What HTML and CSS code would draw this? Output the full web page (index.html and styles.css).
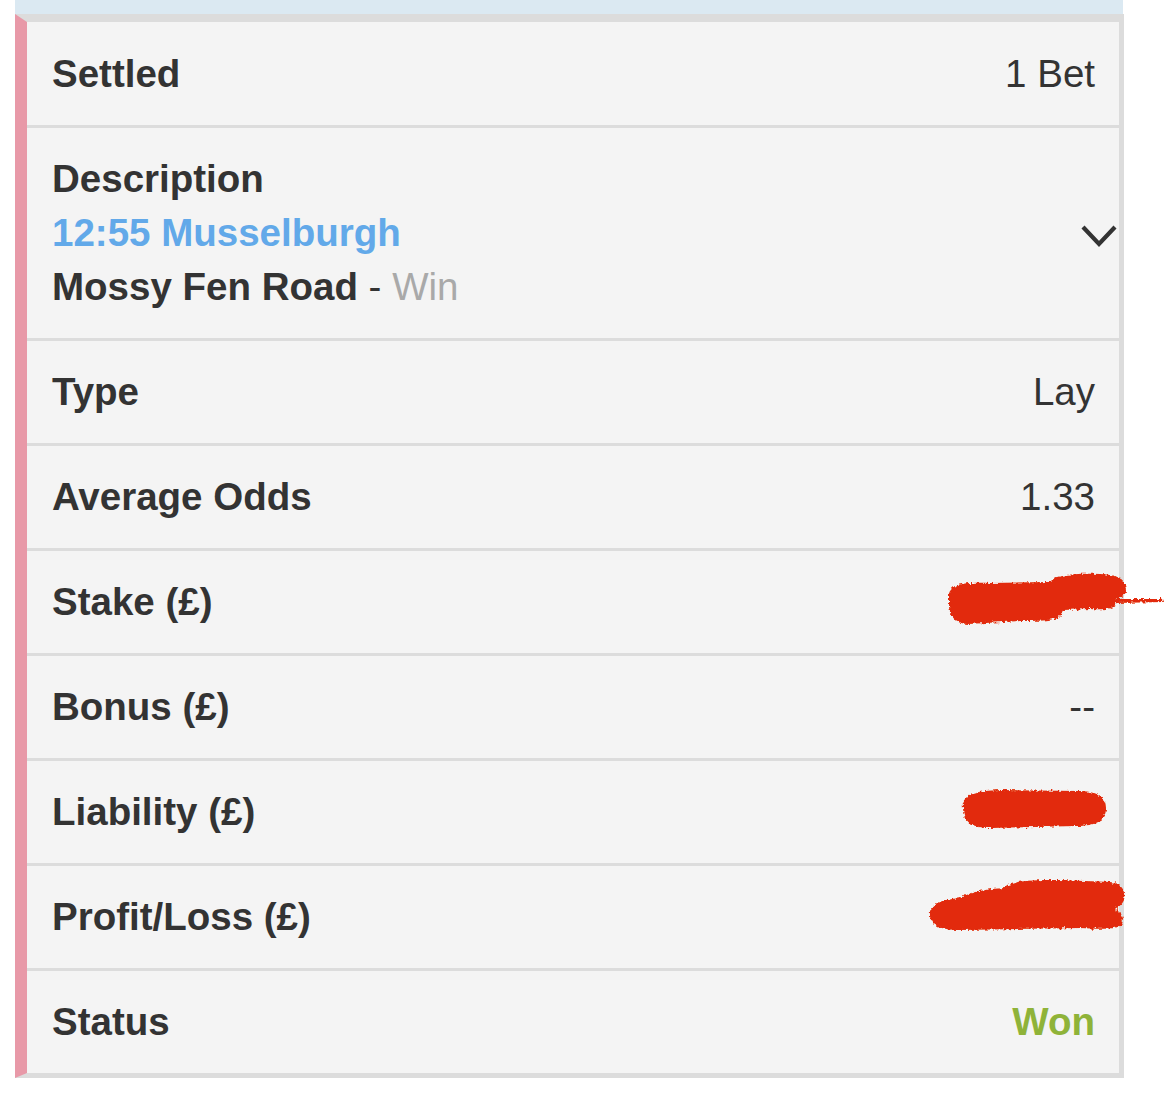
FILE: index.html
```html
<!DOCTYPE html>
<html lang="en">
<head>
<meta charset="utf-8">
<title>Bet details</title>
<link rel="stylesheet" href="styles.css">
</head>
<body>
<div class="page">
  <div class="topstrip"></div>
  <div class="card">
    <div class="row row-first"><span class="label">Settled</span><span class="value">1 Bet</span></div>
    <div class="row row-desc">
      <div class="desc">
        <div class="label">Description</div>
        <div class="event">12:55 Musselburgh</div>
        <div class="selection"><span class="label">Mossy Fen Road</span> - <span class="market">Win</span></div>
      </div>
      <svg class="chevron" width="36" height="24" viewBox="0 0 36 24"><polyline points="2,3 18,20 34,3" fill="none" stroke="#333" stroke-width="4.2" stroke-linejoin="miter"/></svg>
    </div>
    <div class="row"><span class="label">Type</span><span class="value">Lay</span></div>
    <div class="row"><span class="label">Average Odds</span><span class="value">1.33</span></div>
    <div class="row"><span class="label">Stake (£)</span><span class="value"></span></div>
    <div class="row"><span class="label">Bonus (£)</span><span class="value">--</span></div>
    <div class="row"><span class="label">Liability (£)</span><span class="value"></span></div>
    <div class="row"><span class="label">Profit/Loss (£)</span><span class="value"></span></div>
    <div class="row"><span class="label">Status</span><span class="value won">Won</span></div>
  </div>
  <svg class="redact" width="1170" height="1098" viewBox="0 0 1170 1098">
    <defs>
      <filter id="rough" x="-5%" y="-20%" width="110%" height="140%">
        <feTurbulence type="fractalNoise" baseFrequency="0.35" numOctaves="2" seed="3" result="n"/>
        <feDisplacementMap in="SourceGraphic" in2="n" scale="5" xChannelSelector="R" yChannelSelector="G"/>
      </filter>
    </defs>
    <g fill="#e22a08" filter="url(#rough)">
      <path d="M949,596 C948,585 960,582 990,583 L1050,582 C1055,575 1075,573 1100,574 C1120,575 1126,580 1126,590 C1126,596 1121,598 1116,599 L1162,599 L1163,602 L1116,603 C1118,607 1110,610 1090,609 L1063,610 C1062,620 1050,621 1020,621 L968,624 C955,624 949,615 949,605 Z"/>
      <path d="M963,808 C961,795 975,791 1000,790 L1080,791 C1100,792 1106,798 1106,808 C1106,820 1098,826 1075,826 L990,828 C970,828 963,820 963,808 Z"/>
      <path d="M930,915 C929,905 940,900 960,898 C975,890 990,889 1005,888 C1010,881 1030,880 1060,880 L1110,882 C1124,884 1125,892 1124,900 C1122,905 1118,907 1115,910 C1122,912 1124,918 1122,924 C1118,930 1100,929 1080,928 L960,930 C940,930 930,925 930,915 Z"/>
    </g>
  </svg>
</div>
</body>
</html>
```

FILE: styles.css
```css
html, body {
  margin: 0;
  padding: 0;
  background: #ffffff;
}

body {
  font-family: "Liberation Sans", Arial, Helvetica, sans-serif;
  color: #333333;
}

.page {
  position: relative;
  width: 1170px;
  height: 1098px;
  overflow: hidden;
}

.topstrip {
  margin-left: 15px;
  width: 1108px;
  height: 14px;
  background: #dbe9f2;
}

.card {
  margin-left: 15px;
  width: 1109px;
  box-sizing: border-box;
  background: #f4f4f4;
  border-left: 12px solid #e899a8;
  border-top: 8px solid #dcdcdc;
  border-right: 5px solid #dcdcdc;
  border-bottom: 5px solid #dcdcdc;
}

.row {
  display: flex;
  align-items: center;
  justify-content: space-between;
  height: 102px;
  padding: 0 24px 0 25px;
  border-top: 3px solid #dcdcdc;
  font-size: 38.5px;
  line-height: 54px;
}

.row-first {
  border-top: 0;
  height: 103px;
}

.row-desc {
  height: 210px;
  padding-right: 2px;
}

.label {
  font-weight: bold;
  color: #333333;
}

.value {
  font-weight: normal;
  color: #333333;
}

.value.won {
  font-weight: bold;
  color: #8fb339;
}

.event {
  font-weight: bold;
  color: #62a9e9;
}

.selection {
  color: #333333;
}

.market {
  color: #a9a9a9;
}

.chevron {
  display: block;
  margin-top: 5px;
}

.redact {
  position: absolute;
  left: 0;
  top: 0;
  pointer-events: none;
}
```
